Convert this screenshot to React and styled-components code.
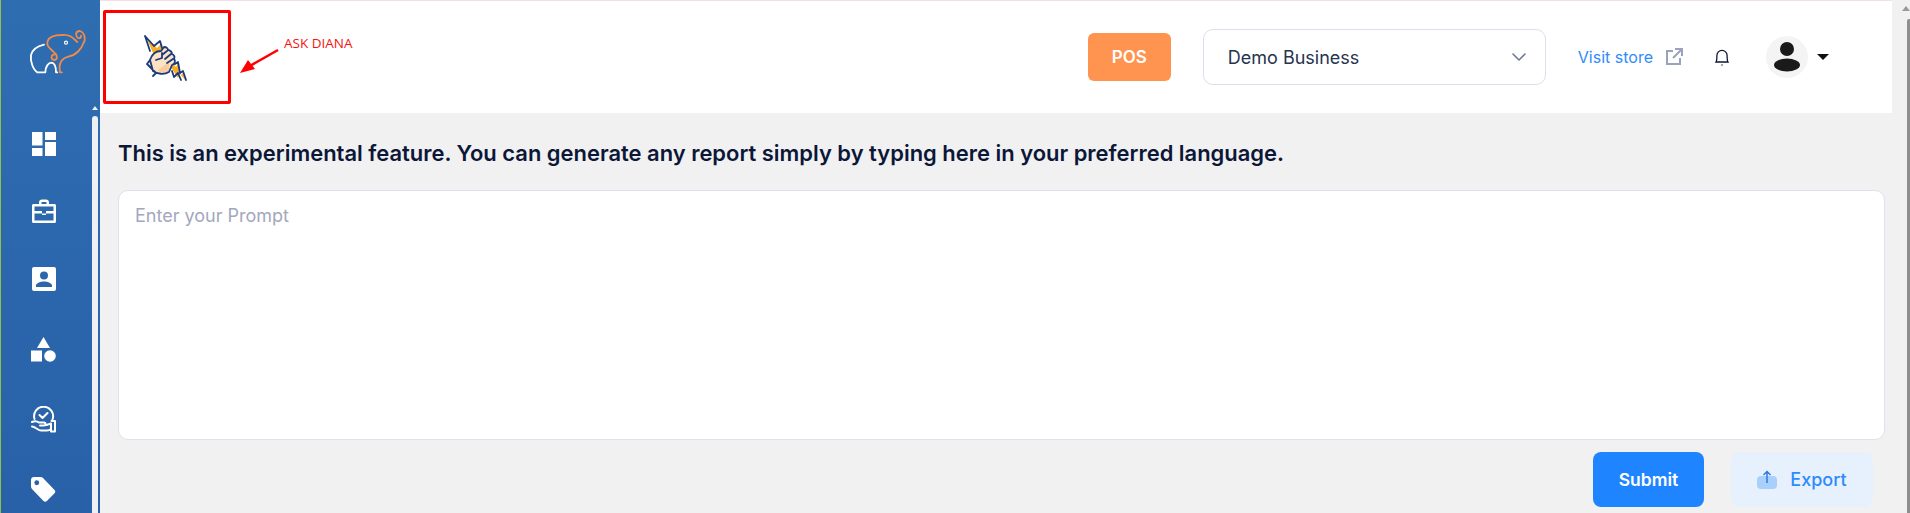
import React from "react";
import styled, { createGlobalStyle } from "styled-components";

const Global = createGlobalStyle`
  html, body { margin: 0; padding: 0; height: 513px; overflow: hidden; background: #f1f1f1; }
  body { font-family: Inter, "Liberation Sans", sans-serif; }
  #root { height: 513px; }
`;
const Page = styled.div`
  position: relative; display: flex; width: 1910px; height: 513px; overflow: hidden; background: #f1f1f1;
`;
const Sidebar = styled.aside`
  position: relative; flex: 0 0 100px; min-width: 0; width: 100px; height: 513px; box-sizing: border-box; overflow: hidden;
  border-left: 1px solid #8fc04c; background: linear-gradient(180deg, #2f6db1, #2861a8);
  display: flex; flex-direction: column; padding-right: 14px;
`;
const LogoSlot = styled.div`
  flex: 0 0 110px; box-sizing: border-box; padding: 20px 0 0 19px;
  svg { display: block; flex-shrink: 0; }
`;
const NavList = styled.nav`
  flex: 0 0 auto; display: flex; flex-direction: column; align-items: center;
`;
const NavItem = styled.div`
  flex: 0 0 ${(p) => p.$h}px; display: flex; align-items: center; justify-content: center;
`;
const NavIcon = styled.svg`
  width: ${(p) => p.$size || 24}px; height: ${(p) => p.$size || 24}px; display: block; fill: #fff; flex-shrink: 0;
`;
const SideScroll = styled.div`
  position: absolute; right: 2px; top: 116px; bottom: 0; width: 6px; background: #eef0f4;
  border-radius: 3px 3px 0 0;
  &::before {
    content: ""; position: absolute; top: -10px; left: 0;
    border: 3px solid transparent; border-top-width: 0; border-bottom: 4px solid #eef0f4;
  }
`;
const Main = styled.main`
  flex: 0 0 1792px; display: flex; flex-direction: column; height: 513px;
`;
const Header = styled.header`
  height: 113px; box-sizing: border-box; background: #fff; border-top: 1px solid #f2dfe9;
  display: flex; align-items: center; padding: 0 0 0 3px;
`;
const BrandBox = styled.div`
  width: 128px; height: 94px; box-sizing: border-box; border: 3px solid #fe0000; border-radius: 2px;
  display: flex; align-items: center; justify-content: center; padding: 8px 3px 0 0;
  margin-top: -3px; margin-bottom: -2px;
`;
const Note = styled.span`
  position: absolute; left: 284px; top: 36px; font-family: "Open Sans", sans-serif;
  font-size: 13.5px; color: #f51313; line-height: 15px;
`;
const Arrow = styled.svg`
  position: absolute; left: 238px; top: 48px; width: 42px; height: 28px;
`;
const Actions = styled.div`
  margin-left: auto; display: flex; align-items: center; padding-right: 63px;
`;
const PosButton = styled.button`
  width: 83px; height: 48px; border: 0; border-radius: 6px; background: #ff9350; color: #fff;
  font: 600 17px Inter, sans-serif; margin-right: 32px; padding: 0;
`;
const BusinessSelect = styled.div`
  width: 343px; height: 56px; box-sizing: border-box; border: 1px solid #dcdfea; border-radius: 10px;
  display: flex; align-items: center; justify-content: space-between; padding: 0 18px 0 24px;
  font-size: 18px; color: #27334f; margin-right: 32px;
`;
const StoreLink = styled.a`
  display: flex; align-items: center; gap: 12px; color: #2f8bfb; font-size: 16px; margin-right: 31px;
`;
const AvatarCircle = styled.div`
  width: 42px; height: 42px; border-radius: 50%; background: #f4f4f4; margin-left: 36px; margin-right: 9px;
  display: flex; align-items: center; justify-content: center;
`;
const Caret = styled.span`
  width: 0; height: 0; border: 6px solid transparent; border-top: 6px solid #111; border-bottom: 0;
`;
const Content = styled.section`
  flex: 1; padding: 0 7px 0 18px; display: flex; flex-direction: column;
`;
const Title = styled.h1`
  margin: 0; padding-top: 27px; font-size: 21.95px; line-height: 26px; font-weight: 600; color: #0c1738;
`;
const Prompt = styled.div`
  margin-top: 24px; height: 250px; box-sizing: border-box; background: #fff; border: 1px solid #dfe1ec;
  border-radius: 10px; padding: 13px 16px; font-size: 18px; line-height: 24px; color: #a3a7bd;
`;
const Footer = styled.div`
  display: flex; justify-content: flex-end; gap: 27px; padding: 12px 12px 0 0;
`;
const Submit = styled.button`
  width: 111px; height: 55px; border: 0; border-radius: 8px; background: #1f84ff; color: #fff;
  font: 600 17.5px Inter, sans-serif; padding: 0;
`;
const Export = styled.button`
  width: 142px; height: 55px; border: 0; border-radius: 8px; background: #e7f1fe; color: #2f8bfb;
  font: 500 18px Inter, sans-serif; padding: 0; display: flex; align-items: center; justify-content: center; gap: 13px;
`;
const PageScroll = styled.div`
  position: relative; flex: 0 0 18px; height: 513px; background: #f1f1f1;
  &::before {
    content: ""; position: absolute; right: 0; top: 6px; border: 4px solid transparent;
    border-top: 0; border-bottom: 5px solid #9a9a9a;
  }
  &::after {
    content: ""; position: absolute; right: 0; top: 19px; width: 3px; height: 494px; background: #8e8e8e; border-radius: 2px 0 0 0;
  }
`;

const Elephant = () => (
  <svg width="70" height="70" viewBox="0 0 210 210" fill="none" strokeLinecap="round" strokeLinejoin="round">
    <path d="M72 74 C55 78 38 85 33 105 C30 125 40 150 52 157 L76 157 C76 140 85 128 95 128 C105 130 108 145 108 157 L112 157" stroke="#fff" strokeWidth="5.500" />
    <path d="M126 157 L120 157 C115 130 125 115 145 110 C170 105 185 85 190 70 C198 60 195 38 180 33 C168 32 165 45 172 52 C178 58 185 52 183 47 M172 66 C160 55 150 42 125 45 C105 45 88 50 83 63 C78 78 90 85 100 95 C112 103 115 118 103 120 C92 118 92 105 103 103" stroke="#f08a4b" strokeWidth="5.500" />
    <circle cx="138" cy="68" r="4.500" stroke="#fff" strokeWidth="3.500" />
  </svg>
);
const FistLogo = () => (
  <svg width="48" height="52" viewBox="0 0 48 52" strokeLinejoin="round" strokeLinecap="round">
    <path d="M4 2 L15 13 L20 8 L21 16 L34 32 L36 28 L39 40 L41 38 L45 47 L38 39 L36 43 L30 34 L12 20 Z" fill="#f9ae25" stroke="none" />
    <path d="M3 1 L8 16 M3 1 L12 11 L18 6 L20 13 M33 29 L36 27 L38 38 L41 36 L44 45 M30 36 L32 42 L36 38 L39 45" fill="none" stroke="#1a3b7e" strokeWidth="1.800" />
    <path d="M7 24 C9 18 14 16 19 16 L23 12 L28 17 L31 20 L33 26 L30 30 L27 37 C22 40 15 39 11 36 L7 31 Z" fill="#fde3c4" stroke="none" />
    <path d="M16 35 L27 27 L27 36 C23 39 18 38 16 35 Z" fill="#fbcba0" stroke="none" />
    <path d="M8 25 C10 19 14 16 19 16 L22 12 C25 12 26 14 26 15 C28 15 30 17 30 19 C32 20 33 22 32 24 C34 26 33 29 30 30 L27 37 C22 40 15 39 11 36 Z M14 25 L20 23 L20 18 M20 20 L25 16 M23 24 L29 19 M25 28 L31 24 M5 29 L14 38 L11 41 M5 29 L8 25" fill="none" stroke="#1a3b7e" strokeWidth="1.800" />
  </svg>
);

export default function App() {
  return (
    <Page>
      <Global />
      <Sidebar>
        <LogoSlot><Elephant /></LogoSlot>
        <NavList>
          <NavItem $h={68}>
            <NavIcon viewBox="0 0 24 24"><path d="M0 0h10.500v13.500H0zM13 0h11v8H13zM13 10h11v14H13zM0 16h10.500v8H0z" /></NavIcon>
          </NavItem>
          <NavItem $h={66}>
            <NavIcon viewBox="0 0 24 24"><path fillRule="evenodd" d="M7 5V3.500C7 1.800 8.200.5 10 .5h4c1.800 0 3 1.300 3 3V5h5.500c.9 0 1.500.6 1.500 1.500v16c0 .9-.6 1.500-1.500 1.500h-21C.6 24 0 23.400 0 22.500v-16C0 5.600.6 5 1.500 5zm2.500 0h5V3h-5zM2.500 7.500v4.500h19V7.500zm0 7v7h19v-7zm7.500-2.500h4v4h-4z" /></NavIcon>
          </NavItem>
          <NavItem $h={70}>
            <NavIcon viewBox="0 0 24 24"><path fillRule="evenodd" d="M2 0h20a2 2 0 0 1 2 2v20a2 2 0 0 1-2 2H2a2 2 0 0 1-2-2V2a2 2 0 0 1 2-2zm10 4.500a4 4 0 1 0 0 8 4 4 0 0 0 0-8zM4 20h16v-1.500C20 16 15 14.500 12 14.500S4 16 4 18.500z" /></NavIcon>
          </NavItem>
          <NavItem $h={70}>
            <NavIcon $size={25} viewBox="0 0 25 25"><path d="M12.500 0l6.500 11H6zM0 13.500h11v11H0z" /><circle cx="19" cy="19" r="5.800" /></NavIcon>
          </NavItem>
          <NavItem $h={70}>
            <svg width="25" height="27" viewBox="0 0 25 27" fill="none" stroke="#fff" strokeWidth="2" strokeLinecap="round" strokeLinejoin="round">
              <path d="M3.500 13a9.500 9.500 0 1 1 18 .500M8.500 9l3 3 5-5" />
              <path d="M1 16c3-1.500 5-1 7 .5h5c2 0 2 3 0 3H9M15.500 19l4.500-1.500V25.500h4V15h-3.500M1 20.500c3 0 6 4 9 4h6c2 0 3-.5 4-1.500" />
            </svg>
          </NavItem>
          <NavItem $h={70}>
            <NavIcon $size={25} viewBox="0 0 26 26"><path d="M3 0h7c1 0 1.800.4 2.500 1l12 12.500c1 1 1 2.500 0 3.500l-8 8c-1 1-2.500 1-3.500 0L1 12.500C.3 11.800 0 11 0 10V3C0 1.300 1.300 0 3 0zm3 3.500a2.500 2.500 0 1 0 0 5 2.500 2.500 0 0 0 0-5z" /></NavIcon>
          </NavItem>
        </NavList>
        <SideScroll />
      </Sidebar>
      <Main>
        <Header>
          <BrandBox><FistLogo /></BrandBox>
          <Actions>
            <PosButton>POS</PosButton>
            <BusinessSelect>
              Demo Business
              <svg width="16" height="10" viewBox="0 0 16 10" fill="none" stroke="#6f7796" strokeWidth="1.600" strokeLinecap="round" strokeLinejoin="round"><path d="M2 2l6 6 6-6" /></svg>
            </BusinessSelect>
            <StoreLink>
              Visit store
              <svg width="18" height="18" viewBox="0 0 18 18" fill="none" stroke="#9aa3bd" strokeWidth="2"><path d="M8 3H2v13h13v-6M10 1h7v7M17 1L8 10" /></svg>
            </StoreLink>
            <svg width="16" height="18" viewBox="0 0 16 18" fill="none" stroke="#0c1738" strokeWidth="1.300"><path d="M2 14c.7-1 .9-3 .9-6.500a5.100 5.100 0 0 1 10.200 0c0 3.500.2 5.500.9 6.500z" /><path d="M7.500 17h1" /></svg>
            <AvatarCircle>
              <svg width="26" height="30" viewBox="0 0 26 30" fill="#1a1a1a"><circle cx="13" cy="7" r="7" /><ellipse cx="13" cy="23" rx="13" ry="6.500" /></svg>
            </AvatarCircle>
            <Caret />
          </Actions>
        </Header>
        <Content>
          <Title>This is an experimental feature. You can generate any report simply by typing here in your preferred language.</Title>
          <Prompt>Enter your Prompt</Prompt>
          <Footer>
            <Submit>Submit</Submit>
            <Export>
              <svg width="20" height="20" viewBox="0 0 20 20"><rect x="0" y="6" width="20" height="13" rx="4" fill="#a9cffc" /><path d="M10 13V2M6.500 5L10 1.500 13.500 5" fill="none" stroke="#2f78e8" strokeWidth="1.500" /></svg>
              Export
            </Export>
          </Footer>
        </Content>
      </Main>
      <PageScroll />
      <Note>ASK DIANA</Note>
      <Arrow viewBox="0 0 42 28"><path d="M40 2L10 19" stroke="#f00" strokeWidth="2.500" /><path d="M2 25L17 21 10 12z" fill="#f00" /></Arrow>
    </Page>
  );
}
